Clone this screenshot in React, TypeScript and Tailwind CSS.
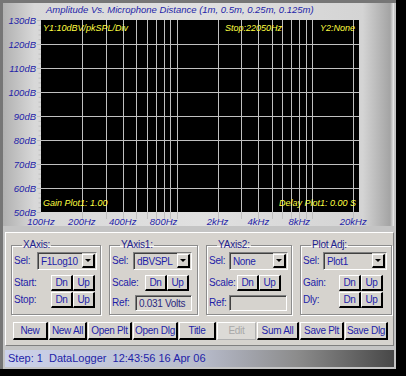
import React from 'react';

const BLUE = '#1e1ea8';

const yLabels = ['130dB', '120dB', '110dB', '100dB', '90dB', '80dB', '70dB', '60dB', '50dB'];
const xLabels: [number, string][] = [
  [100, '100Hz'],
  [200, '200Hz'],
  [400, '400Hz'],
  [800, '800Hz'],
  [2000, '2kHz'],
  [4000, '4kHz'],
  [8000, '8kHz'],
  [20000, '20kHz'],
];

const PX = 38;
const PY = 5;
const PW = 318;
const PH = 192;

function fx(f: number) {
  return PX + ((Math.log10(f) - 2) / Math.log10(220.5)) * PW;
}

const gridFreqs: number[] = [];
for (const decade of [100, 1000, 10000]) {
  for (let m = 1; m <= 9; m++) {
    const f = decade * m;
    if (f > 100 && f <= 20000) gridFreqs.push(f);
  }
}

const Chart: React.FC = () => (
  <svg width={391} height={211} className="block overflow-visible" style={{ fontFamily: 'Liberation Sans, Arial, sans-serif' }}>
    <rect x={PX} y={PY} width={PW} height={PH} fill="#000" />
    {Array.from({ length: 41 }).map((_, i) => {
      const y = PY + i * 4.8;
      const major = i % 5 === 0;
      return <line key={'t' + i} x1={major ? 34 : 35.5} x2={PX} y1={y + 0.5} y2={y + 0.5} stroke="#c0c0c0" strokeWidth={1} />;
    })}
    {[1, 2, 3, 4, 5, 6, 7].map((k) => (
      <line key={'h' + k} x1={PX} x2={PX + PW} y1={PY + k * 24 + 0.5} y2={PY + k * 24 + 0.5} stroke="#c0c0c0" strokeWidth={1} />
    ))}
    {gridFreqs.map((f) => {
      const x = Math.round(fx(f)) + 0.5;
      return <line key={'v' + f} x1={x} x2={x} y1={PY} y2={PY + PH + 7} stroke="#c0c0c0" strokeWidth={1} />;
    })}
    {yLabels.map((l, k) => (
      <text key={l} x={33} y={PY + k * 24 + 3.5} textAnchor="end" fontSize={9.5} fontStyle="italic" fill={BLUE}>
        {l}
      </text>
    ))}
    {xLabels.map(([f, l]) => (
      <text key={l} x={fx(f)} y={209.5} textAnchor="middle" fontSize={9.5} fontStyle="italic" fill={BLUE}>
        {l}
      </text>
    ))}
    <g fontSize={9} fontStyle="italic" fill="#ffff40">
      <text x={40} y={16}>Y1:10dBV/pkSPL/Div</text>
      <text x={222} y={16}>Stop:22050Hz</text>
      <text x={352} y={16} textAnchor="end">Y2:None</text>
      <text x={40} y={190.5}>Gain Plot1: 1.00</text>
      <text x={353} y={190.5} textAnchor="end">Delay Plot1: 0.00 S</text>
    </g>
  </svg>
);

const SmallButton: React.FC<{ label: string }> = ({ label }) => (
  <button className="h-[16px] w-[22px] bg-[#d6d3ce] text-[10px] tracking-[-0.3px] leading-none text-[#1e1ea8] border-t border-l border-t-white border-l-white border-r-2 border-b-2 border-r-black border-b-black flex items-center justify-center">
    {label}
  </button>
);

const Dropdown: React.FC<{ value: string; width: string }> = ({ value, width }) => (
  <div className={`${width} h-[18px] flex items-center border-t border-l border-t-[#808080] border-l-[#808080] border-b border-r border-b-white border-r-white bg-[#d6d3ce]`}>
    <div className="flex-1 min-w-0 flex items-center h-full border-t border-l border-t-[#404040] border-l-[#404040] pl-[2px] text-[10px] tracking-[-0.4px] text-[#1e1ea8] leading-none whitespace-nowrap">
      {value}
    </div>
    <div className="w-[13px] h-[14px] mr-[1px] shrink-0 flex items-center justify-center bg-[#d6d3ce] border-t border-l border-t-white border-l-white border-r-2 border-b-2 border-r-black border-b-black">
      <div className="w-0 h-0 border-l-[3px] border-r-[3px] border-t-[3px] border-l-transparent border-r-transparent border-t-black" />
    </div>
  </div>
);

const Field: React.FC<{ value?: string; width: string }> = ({ value, width }) => (
  <div className={`${width} h-[16px] flex items-center border-t border-l border-t-[#808080] border-l-[#808080] border-b border-r border-b-white border-r-white bg-[#d6d3ce]`}>
    <div className="flex-1 h-full flex items-center border-t border-l border-t-[#404040] border-l-[#404040] pl-[2px] text-[10px] tracking-[-0.3px] text-[#2a2a80] leading-none whitespace-nowrap">
      {value}
    </div>
  </div>
);

const Label: React.FC<{ children: React.ReactNode; className?: string }> = ({ children, className }) => (
  <span className={`text-[10px] tracking-[-0.2px] leading-none text-[#1e1ea8] ${className ?? ''}`}>{children}</span>
);

const Group: React.FC<{ title: string; width: string; children: React.ReactNode }> = ({ title, width, children }) => (
  <fieldset className={`${width} h-[76px] border border-[#8c8c8c] shadow-[inset_1px_1px_0_#ffffff,1px_1px_0_#ffffff] px-[2px]`}>
    <legend className="ml-[8px] px-[1px] text-[10px] tracking-[-0.2px] leading-[12px] text-[#1e1e8c]">{title}</legend>
    {children}
  </fieldset>
);

const bottomButtons: [string, string][] = [
  ['New', 'w-[35px]'],
  ['New All', 'w-[38px]'],
  ['Open Plt', 'w-[44px]'],
  ['Open Dlg', 'w-[45px]'],
  ['Title', 'w-[37px]'],
  ['Edit', 'w-[39px]'],
  ['Sum All', 'w-[42px]'],
  ['Save Plt', 'w-[44px]'],
  ['Save Dlg', 'w-[43px]'],
];

export default function App() {
  return (
    <div className="w-[406px] h-[376px] bg-black overflow-hidden font-['Liberation_Sans',Arial,sans-serif]">
      <div className="w-[396px] h-[369px] bg-[#c4c4c4] border-l-[3px] border-t-[3px] border-[#767676] flex flex-col">
        <div className="w-[391px] h-[223px] flex flex-col bg-[linear-gradient(90deg,#b0b0b0_0%,#d8d8d8_8%,#e0e0e0_50%,#d4d4d4_92%,#a4a4a4_99%,#eeeeee_100%)]">
          <div className="h-[12px] pl-[43px] pt-[1px] text-[9.5px] leading-[12px] italic text-[#1e1ea8] whitespace-nowrap">
            Amplitude Vs. Microphone Distance (1m, 0.5m, 0.25m, 0.125m)
          </div>
          <Chart />
        </div>

        <div className="mt-[6px] ml-[2px] w-[389px] h-[114px] bg-[#d6d3ce] border-t border-l border-t-white border-l-white border-b border-r border-b-[#808080] border-r-[#808080] flex flex-col">
          <div className="flex gap-[8px] pl-[5px] mt-[6px]">
            <Group title="XAxis:" width="w-[90px]">
              <div className="flex items-center mt-[1px] gap-[3px]">
                <Label className="w-[20px]">Sel:</Label>
                <Dropdown value="F1Log10" width="w-[60px]" />
              </div>
              <div className="flex items-center mt-[5px]">
                <Label className="w-[37px]">Start:</Label>
                <SmallButton label="Dn" />
                <SmallButton label="Up" />
              </div>
              <div className="flex items-center mt-[1px]">
                <Label className="w-[37px]">Stop:</Label>
                <SmallButton label="Dn" />
                <SmallButton label="Up" />
              </div>
            </Group>
            <Group title="YAxis1:" width="w-[89px]">
              <div className="flex items-center mt-[1px] gap-[2px]">
                <Label className="w-[19px]">Sel:</Label>
                <Dropdown value="dBVSPL" width="w-[59px]" />
              </div>
              <div className="flex items-center mt-[5px]">
                <Label className="w-[33px]">Scale:</Label>
                <SmallButton label="Dn" />
                <SmallButton label="Up" />
              </div>
              <div className="flex items-center mt-[4px] gap-[4px]">
                <Label className="w-[19px]">Ref:</Label>
                <Field value="0.031 Volts" width="w-[57px]" />
              </div>
            </Group>
            <Group title="YAxis2:" width="w-[86px]">
              <div className="flex items-center mt-[1px] gap-[2px]">
                <Label className="w-[18px]">Sel:</Label>
                <Dropdown value="None" width="w-[59px]" />
              </div>
              <div className="flex items-center mt-[5px]">
                <Label className="w-[28px]">Scale:</Label>
                <SmallButton label="Dn" />
                <SmallButton label="Up" />
              </div>
              <div className="flex items-center mt-[4px] gap-[2px]">
                <Label className="w-[18px]">Ref:</Label>
                <Field width="w-[58px]" />
              </div>
            </Group>
            <Group title="Plot Adj:" width="w-[92px]">
              <div className="flex items-center mt-[1px] gap-[2px]">
                <Label className="w-[18px]">Sel:</Label>
                <Dropdown value="Plot1" width="w-[64px]" />
              </div>
              <div className="flex items-center mt-[5px]">
                <Label className="w-[36px]">Gain:</Label>
                <SmallButton label="Dn" />
                <SmallButton label="Up" />
              </div>
              <div className="flex items-center mt-[1px]">
                <Label className="w-[36px]">Dly:</Label>
                <SmallButton label="Dn" />
                <SmallButton label="Up" />
              </div>
            </Group>
          </div>

          <div className="flex gap-[1px] pl-[7px] mt-[7px]">
            {bottomButtons.map(([label, w]) =>
              label === 'Edit' ? (
                <button
                  key={label}
                  className={`${w} h-[18px] bg-[#dcdad6] text-[10px] tracking-[-0.3px] leading-none text-[#a8a8a8] border border-t-white border-l-white border-b-[#b0b0b0] border-r-[#b0b0b0] flex items-center justify-center`}
                >
                  {label}
                </button>
              ) : (
                <button
                  key={label}
                  className={`${w} h-[18px] bg-[#d6d3ce] text-[10px] tracking-[-0.3px] leading-none text-[#1e1ea8] border-t border-l border-t-white border-l-white border-r-2 border-b-2 border-r-black border-b-black flex items-center justify-center whitespace-nowrap`}
                >
                  {label}
                </button>
              ),
            )}
          </div>
        </div>

        <div className="mt-[4px] ml-[2px] w-[389px] h-[17px] flex items-center pl-[3px] bg-[linear-gradient(90deg,#ccd2ea_0%,#b8bccc_50%,#8c8c8c_75%,#484848_100%)] text-[11px] leading-none text-[#1e1ea8] whitespace-pre">
          {'Step: 1  DataLogger  12:43:56 16 Apr 06'}
        </div>
      </div>
    </div>
  );
}
